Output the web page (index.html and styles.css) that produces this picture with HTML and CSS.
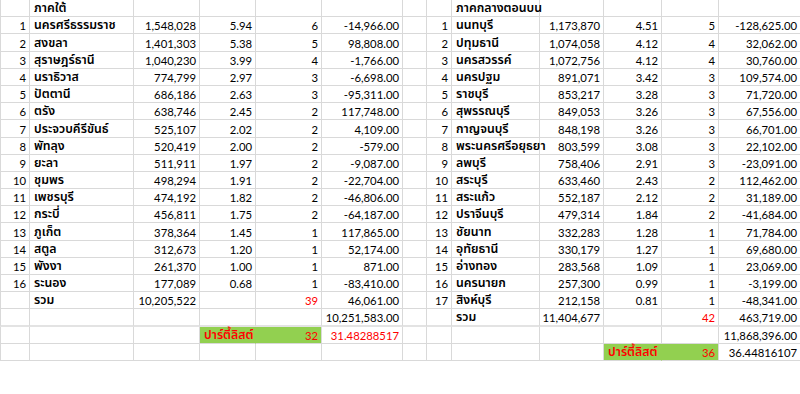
FILE: index.html
```html
<!DOCTYPE html>
<html lang="th">
<head>
<meta charset="utf-8">
<title>Sheet</title>
<link rel="stylesheet" href="styles.css">
</head>
<body>
<div class="sheet">
  <div class="row"><div class="c"></div><div class="c t">ภาคใต้</div><div class="c"></div><div class="c"></div><div class="c"></div><div class="c"></div><div class="c"></div><div class="c"></div><div class="c t">ภาคกลางตอนบน</div><div class="c"></div><div class="c"></div><div class="c"></div><div class="c"></div></div>
  <div class="row"><div class="c n">1</div><div class="c t">นครศรีธรรมราช</div><div class="c n">1,548,028</div><div class="c n">5.94</div><div class="c n">6</div><div class="c n">-14,966.00</div><div class="c"></div><div class="c n">1</div><div class="c t">นนทบุรี</div><div class="c n">1,173,870</div><div class="c n">4.51</div><div class="c n">5</div><div class="c n">-128,625.00</div></div>
  <div class="row"><div class="c n">2</div><div class="c t">สงขลา</div><div class="c n">1,401,303</div><div class="c n">5.38</div><div class="c n">5</div><div class="c n">98,808.00</div><div class="c"></div><div class="c n">2</div><div class="c t">ปทุมธานี</div><div class="c n">1,074,058</div><div class="c n">4.12</div><div class="c n">4</div><div class="c n">32,062.00</div></div>
  <div class="row"><div class="c n">3</div><div class="c t">สุราษฎร์ธานี</div><div class="c n">1,040,230</div><div class="c n">3.99</div><div class="c n">4</div><div class="c n">-1,766.00</div><div class="c"></div><div class="c n">3</div><div class="c t">นครสวรรค์</div><div class="c n">1,072,756</div><div class="c n">4.12</div><div class="c n">4</div><div class="c n">30,760.00</div></div>
  <div class="row"><div class="c n">4</div><div class="c t">นราธิวาส</div><div class="c n">774,799</div><div class="c n">2.97</div><div class="c n">3</div><div class="c n">-6,698.00</div><div class="c"></div><div class="c n">4</div><div class="c t">นครปฐม</div><div class="c n">891,071</div><div class="c n">3.42</div><div class="c n">3</div><div class="c n">109,574.00</div></div>
  <div class="row"><div class="c n">5</div><div class="c t">ปัตตานี</div><div class="c n">686,186</div><div class="c n">2.63</div><div class="c n">3</div><div class="c n">-95,311.00</div><div class="c"></div><div class="c n">5</div><div class="c t">ราชบุรี</div><div class="c n">853,217</div><div class="c n">3.28</div><div class="c n">3</div><div class="c n">71,720.00</div></div>
  <div class="row"><div class="c n">6</div><div class="c t">ตรัง</div><div class="c n">638,746</div><div class="c n">2.45</div><div class="c n">2</div><div class="c n">117,748.00</div><div class="c"></div><div class="c n">6</div><div class="c t">สุพรรณบุรี</div><div class="c n">849,053</div><div class="c n">3.26</div><div class="c n">3</div><div class="c n">67,556.00</div></div>
  <div class="row"><div class="c n">7</div><div class="c t">ประจวบคีรีขันธ์</div><div class="c n">525,107</div><div class="c n">2.02</div><div class="c n">2</div><div class="c n">4,109.00</div><div class="c"></div><div class="c n">7</div><div class="c t">กาญจนบุรี</div><div class="c n">848,198</div><div class="c n">3.26</div><div class="c n">3</div><div class="c n">66,701.00</div></div>
  <div class="row"><div class="c n">8</div><div class="c t">พัทลุง</div><div class="c n">520,419</div><div class="c n">2.00</div><div class="c n">2</div><div class="c n">-579.00</div><div class="c"></div><div class="c n">8</div><div class="c t">พระนครศรีอยุธยา</div><div class="c n">803,599</div><div class="c n">3.08</div><div class="c n">3</div><div class="c n">22,102.00</div></div>
  <div class="row"><div class="c n">9</div><div class="c t">ยะลา</div><div class="c n">511,911</div><div class="c n">1.97</div><div class="c n">2</div><div class="c n">-9,087.00</div><div class="c"></div><div class="c n">9</div><div class="c t">ลพบุรี</div><div class="c n">758,406</div><div class="c n">2.91</div><div class="c n">3</div><div class="c n">-23,091.00</div></div>
  <div class="row"><div class="c n">10</div><div class="c t">ชุมพร</div><div class="c n">498,294</div><div class="c n">1.91</div><div class="c n">2</div><div class="c n">-22,704.00</div><div class="c"></div><div class="c n">10</div><div class="c t">สระบุรี</div><div class="c n">633,460</div><div class="c n">2.43</div><div class="c n">2</div><div class="c n">112,462.00</div></div>
  <div class="row"><div class="c n">11</div><div class="c t">เพชรบุรี</div><div class="c n">474,192</div><div class="c n">1.82</div><div class="c n">2</div><div class="c n">-46,806.00</div><div class="c"></div><div class="c n">11</div><div class="c t">สระแก้ว</div><div class="c n">552,187</div><div class="c n">2.12</div><div class="c n">2</div><div class="c n">31,189.00</div></div>
  <div class="row"><div class="c n">12</div><div class="c t">กระบี่</div><div class="c n">456,811</div><div class="c n">1.75</div><div class="c n">2</div><div class="c n">-64,187.00</div><div class="c"></div><div class="c n">12</div><div class="c t">ปราจีนบุรี</div><div class="c n">479,314</div><div class="c n">1.84</div><div class="c n">2</div><div class="c n">-41,684.00</div></div>
  <div class="row"><div class="c n">13</div><div class="c t">ภูเก็ต</div><div class="c n">378,364</div><div class="c n">1.45</div><div class="c n">1</div><div class="c n">117,865.00</div><div class="c"></div><div class="c n">13</div><div class="c t">ชัยนาท</div><div class="c n">332,283</div><div class="c n">1.28</div><div class="c n">1</div><div class="c n">71,784.00</div></div>
  <div class="row"><div class="c n">14</div><div class="c t">สตูล</div><div class="c n">312,673</div><div class="c n">1.20</div><div class="c n">1</div><div class="c n">52,174.00</div><div class="c"></div><div class="c n">14</div><div class="c t">อุทัยธานี</div><div class="c n">330,179</div><div class="c n">1.27</div><div class="c n">1</div><div class="c n">69,680.00</div></div>
  <div class="row"><div class="c n">15</div><div class="c t">พังงา</div><div class="c n">261,370</div><div class="c n">1.00</div><div class="c n">1</div><div class="c n">871.00</div><div class="c"></div><div class="c n">15</div><div class="c t">อ่างทอง</div><div class="c n">283,568</div><div class="c n">1.09</div><div class="c n">1</div><div class="c n">23,069.00</div></div>
  <div class="row"><div class="c n">16</div><div class="c t">ระนอง</div><div class="c n">177,089</div><div class="c n">0.68</div><div class="c n">1</div><div class="c n">-83,410.00</div><div class="c"></div><div class="c n">16</div><div class="c t">นครนายก</div><div class="c n">257,300</div><div class="c n">0.99</div><div class="c n">1</div><div class="c n">-3,199.00</div></div>
  <div class="row"><div class="c"></div><div class="c t">รวม</div><div class="c n">10,205,522</div><div class="c"></div><div class="c n red">39</div><div class="c n">46,061.00</div><div class="c"></div><div class="c n">17</div><div class="c t">สิงห์บุรี</div><div class="c n">212,158</div><div class="c n">0.81</div><div class="c n">1</div><div class="c n">-48,341.00</div></div>
  <div class="row"><div class="c"></div><div class="c"></div><div class="c"></div><div class="c"></div><div class="c"></div><div class="c n">10,251,583.00</div><div class="c"></div><div class="c"></div><div class="c t">รวม</div><div class="c n">11,404,677</div><div class="c"></div><div class="c n red">42</div><div class="c n">463,719.00</div></div>
  <div class="row"><div class="c"></div><div class="c"></div><div class="c"></div><div class="c t g gl red">ปาร์ตี้ลิสต์</div><div class="c n g red">32</div><div class="c n red">31.48288517</div><div class="c"></div><div class="c"></div><div class="c"></div><div class="c"></div><div class="c"></div><div class="c"></div><div class="c n">11,868,396.00</div></div>
  <div class="row"><div class="c"></div><div class="c"></div><div class="c"></div><div class="c"></div><div class="c"></div><div class="c"></div><div class="c"></div><div class="c"></div><div class="c"></div><div class="c"></div><div class="c t g gl red">ปาร์ตี้ลิสต์</div><div class="c n g red">36</div><div class="c n">36.44816107</div></div>
</div>
</body>
</html>
```

FILE: styles.css
```css
html, body {
  margin: 0;
  padding: 0;
  background: #ffffff;
  overflow: hidden;
}

.sheet {
  display: grid;
  grid-template-columns: 30px 104px 66px 56px 66px 81px 24px 25px 88px 64px 58px 57px 82px;
  grid-auto-rows: 17.19px;
  width: 801px;
  font-family: "Lato", "Liberation Sans", sans-serif;
  font-size: 11.3px;
  color: #000000;
}

.row {
  display: contents;
}

.c {
  box-sizing: border-box;
  border-right: 1px solid #d9d9d9;
  border-bottom: 1px solid #d9d9d9;
  display: flex;
  align-items: flex-end;
  padding: 0 3px 1px 3px;
  line-height: 13px;
  white-space: nowrap;
  overflow: visible;
  min-width: 0;
}

.row > .c:first-child {
  border-left: 1px solid #d9d9d9;
}

.row:nth-child(19) > .c {
  border-bottom: 2px solid #e3e3e3;
}

.n {
  justify-content: flex-end;
}

.t {
  justify-content: flex-start;
  font-family: "Noto Sans Thai", "Tahoma", "Loma", "Garuda", "Noto Sans", sans-serif;
  font-size: 12.3px;
  font-weight: 600;
  padding-left: 4px;
}

.g {
  background: #92d050;
}

.gl {
  border-right-color: #92d050;
}

.red {
  color: #ff0000;
}
```
